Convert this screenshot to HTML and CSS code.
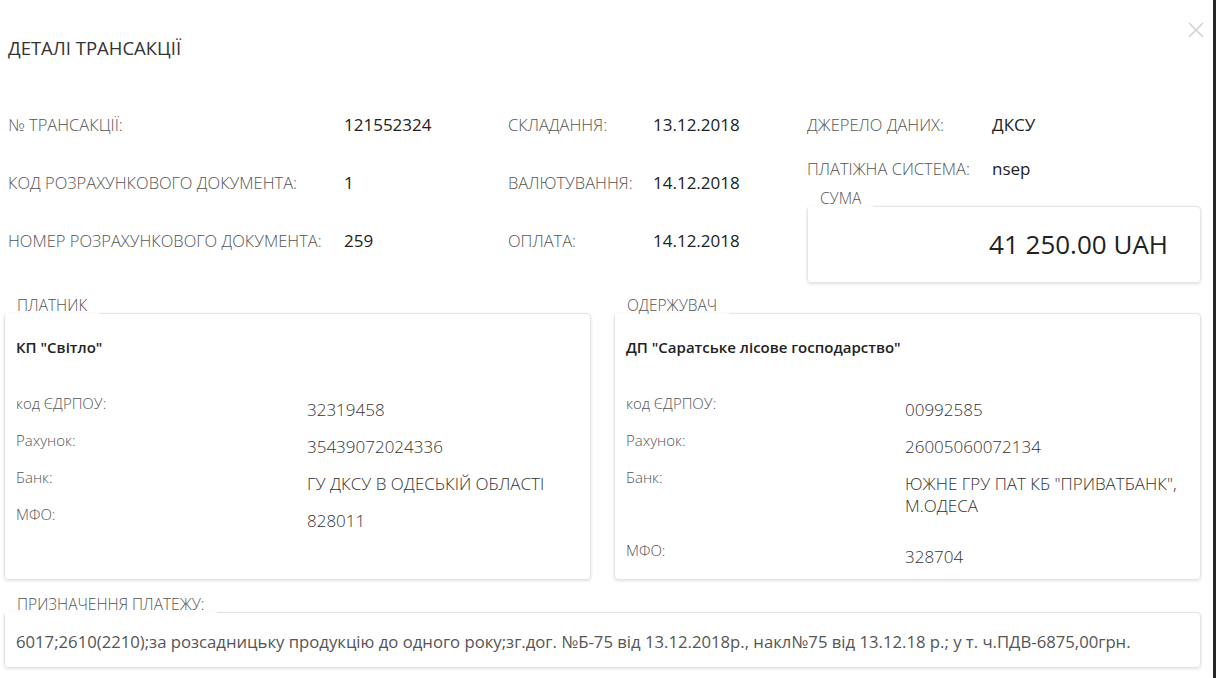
FILE: index.html
```html
<!DOCTYPE html>
<html lang="uk">
<head>
    <meta charset="UTF-8">
    <meta name="viewport" content="width=device-width, initial-scale=1.0">
    <title>Деталі трансакції</title>
    <link rel="stylesheet" href="styles.css">
</head>
<body>

    <div class="modal">
        <div class="modal-header">
            <h1>ДЕТАЛІ ТРАНСАКЦІЇ</h1>
            <button class="close" aria-label="Закрити">
                <svg width="18" height="18" viewBox="0 0 18 18">
                    <path d="M2 2 L16 16 M16 2 L2 16" stroke="#d2d2d2" stroke-width="1.6" fill="none" />
                </svg>
            </button>
        </div>

        <div class="info">
            <div class="info-grid">
                <span class="label">№ ТРАНСАКЦІЇ:</span>
                <span class="value">121552324</span>
                <span class="label">СКЛАДАННЯ:</span>
                <span class="value">13.12.2018</span>

                <span class="label">КОД РОЗРАХУНКОВОГО ДОКУМЕНТА:</span>
                <span class="value">1</span>
                <span class="label">ВАЛЮТУВАННЯ:</span>
                <span class="value">14.12.2018</span>

                <span class="label">НОМЕР РОЗРАХУНКОВОГО ДОКУМЕНТА:</span>
                <span class="value">259</span>
                <span class="label">ОПЛАТА:</span>
                <span class="value">14.12.2018</span>
            </div>

            <div class="info-side">
                <div class="side-row">
                    <span class="label">ДЖЕРЕЛО ДАНИХ:</span>
                    <span class="value">ДКСУ</span>
                </div>
                <div class="side-row">
                    <span class="label">ПЛАТІЖНА СИСТЕМА:</span>
                    <span class="value">nsep</span>
                </div>
                <fieldset class="group">
                    <legend>СУМА</legend>
                    <div class="amount">41 250.00 UAH</div>
                </fieldset>
            </div>
        </div>

        <div class="parties">
            <fieldset class="group party payer">
                <legend>ПЛАТНИК</legend>
                <div class="party-body">
                    <div class="party-name">КП "Світло"</div>
                    <div class="row">
                        <span class="row-label">код ЄДРПОУ:</span>
                        <span class="row-value">32319458</span>
                    </div>
                    <div class="row">
                        <span class="row-label">Рахунок:</span>
                        <span class="row-value">35439072024336</span>
                    </div>
                    <div class="row">
                        <span class="row-label">Банк:</span>
                        <span class="row-value">ГУ ДКСУ В ОДЕСЬКІЙ ОБЛАСТІ</span>
                    </div>
                    <div class="row">
                        <span class="row-label">МФО:</span>
                        <span class="row-value">828011</span>
                    </div>
                </div>
            </fieldset>

            <fieldset class="group party receiver">
                <legend>ОДЕРЖУВАЧ</legend>
                <div class="party-body">
                    <div class="party-name">ДП "Саратське лісове господарство"</div>
                    <div class="row">
                        <span class="row-label">код ЄДРПОУ:</span>
                        <span class="row-value">00992585</span>
                    </div>
                    <div class="row">
                        <span class="row-label">Рахунок:</span>
                        <span class="row-value">26005060072134</span>
                    </div>
                    <div class="row row-tall">
                        <span class="row-label">Банк:</span>
                        <span class="row-value">ЮЖНЕ ГРУ ПАТ КБ "ПРИВАТБАНК", М.ОДЕСА</span>
                    </div>
                    <div class="row">
                        <span class="row-label">МФО:</span>
                        <span class="row-value">328704</span>
                    </div>
                </div>
            </fieldset>
        </div>

        <fieldset class="group purpose">
            <legend>ПРИЗНАЧЕННЯ ПЛАТЕЖУ:</legend>
            <p>6017;2610(2210);за розсадницьку продукцію до одного року;зг.дог. №Б-75 від 13.12.2018р., накл№75 від 13.12.18 р.; у т. ч.ПДВ-6875,00грн.</p>
        </fieldset>
    </div>

</body>
</html>
```

FILE: styles.css
```css
body {
    font-family: 'Open Sans', 'Noto Sans', sans-serif;
    background-color: #fff;
    color: #333;
    margin: 0;
    padding: 0;
}
.modal {
    box-sizing: border-box;
    height: 678px;
    border-right: 3px solid #262626;
    padding: 20px 12px 0 4px;
}
.modal-header {
    display: flex;
    justify-content: space-between;
    align-items: flex-start;
}
.modal-header h1 {
    margin: 16px 0 0 4px;
    font-size: 18.5px;
    font-weight: 400;
    line-height: 24px;
    color: #333;
}
.close {
    border: none;
    background: none;
    padding: 0;
    margin: 1px -4px 0 0;
    cursor: pointer;
}

/* top block */
.info {
    display: flex;
    margin-top: 53px;
}
.info-grid {
    display: grid;
    grid-template-columns: 336px 164px 145px 154px;
    grid-auto-rows: 22px;
    row-gap: 36px;
    padding-left: 4px;
    align-items: center;
}
.info-side {
    flex: 1;
    display: flex;
    flex-direction: column;
}
.side-row {
    display: flex;
    align-items: center;
    height: 22px;
    margin-bottom: 22px;
}
.side-row .label {
    width: 185px;
}
.label {
    font-size: 16.5px;
    font-weight: 300;
    color: #555;
    white-space: nowrap;
}
.value {
    font-size: 17px;
    color: #222;
}

/* framed groups */
.group {
    margin: 0;
    padding: 0;
    min-width: 0;
    border: 1px solid #e4e4e4;
    border-radius: 4px;
    box-shadow: 0 1px 3px rgba(0, 0, 0, 0.12);
}
.group legend {
    padding: 0 12px 16px 12px;
    font-size: 15.5px;
    font-weight: 300;
    line-height: 18px;
    color: #555;
}
.info-side .group {
    margin-top: -12px;
}
.amount {
    text-align: right;
    font-size: 26px;
    line-height: 36px;
    color: #222;
    padding: 0 32px 20px 0;
    margin-top: 3px;
}

/* payer / receiver */
.parties {
    display: flex;
    gap: 23px;
    margin-top: 13px;
}
.party {
    flex: 1;
}
.party-body {
    padding: 6px 11px 2px;
}
.party-name {
    font-size: 15px;
    font-weight: 600;
    line-height: 22px;
    color: #222;
    margin-bottom: 35px;
}
.row {
    display: grid;
    grid-template-columns: 1fr 1fr;
    margin-bottom: 9px;
}
.payer .row {
    grid-template-columns: 291px 1fr;
}
.receiver .row {
    grid-template-columns: 279px 1fr;
}
.row-label {
    font-size: 15px;
    font-weight: 300;
    line-height: 20px;
    color: #555;
}
.row-value {
    padding-top: 6px;
    font-size: 17px;
    font-weight: 300;
    line-height: 22px;
    color: #333;
}
.row-tall {
    margin-bottom: 23px;
}

/* purpose */
.purpose {
    margin-top: 15px;
}
.purpose p {
    margin: 0;
    padding: 2px 11px 14px;
    font-size: 16.7px;
    font-weight: 400;
    line-height: 22px;
    color: #555;
}
```
